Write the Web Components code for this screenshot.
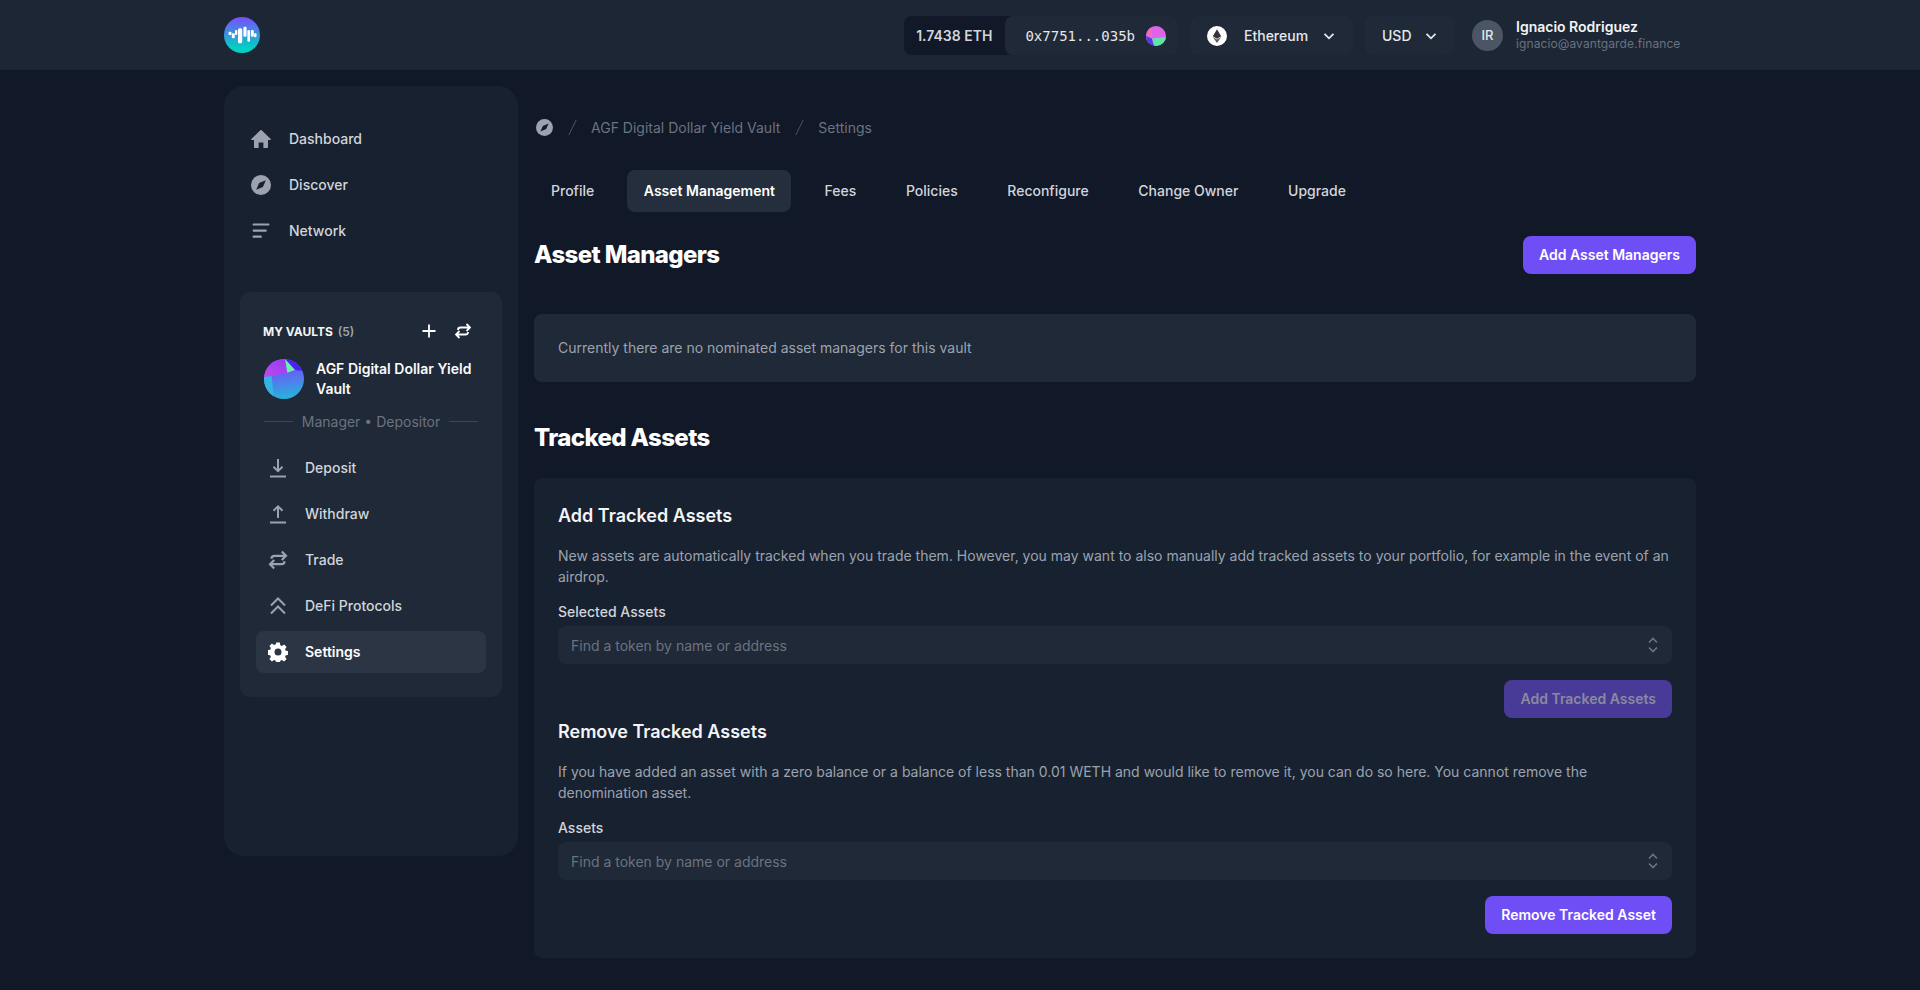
<!DOCTYPE html>
<html lang="en">
<head>
<meta charset="utf-8">
<title>Asset Management</title>
<style>
  html, body { margin: 0; padding: 0; background: #111827; overflow: hidden; }
  body { font-family: Inter, "Liberation Sans", sans-serif; color: #fff; }
</style>
</head>
<body>
<app-shell>
  <app-header slot="header"></app-header>
  <side-nav slot="side"></side-nav>
  <settings-page slot="main"></settings-page>
</app-shell>

<script>
const ICONS = {
  home: '<svg viewBox="0 0 20 20" width="20" height="20" fill="currentColor"><path d="M10.700 1.300a1 1 0 0 0-1.400 0l-9 8.700c-.3.4-.1.9.4.9H3v7.100c0 .6.4 1 1 1h3.600v-5.500h4.800V19H16c.6 0 1-.4 1-1v-7.100h2.300c.5 0 .7-.5.4-.9z"/></svg>',
  compass: '<svg viewBox="0 0 20 20" width="20" height="20"><circle cx="10" cy="10" r="10" fill="currentColor"/><path d="M14.800 5.200 11.900 11.900 5.200 14.800 8.100 8.100z" fill="var(--cut,#18212f)"/></svg>',
  network: '<svg viewBox="0 0 20 20" width="20" height="20" fill="currentColor"><rect x="1.700" y="2.400" width="16.600" height="2.200" rx=".6"/><rect x="1.700" y="8.500" width="14" height="2.200" rx=".6"/><rect x="1.700" y="14.600" width="9" height="2.200" rx=".6"/></svg>',
  deposit: '<svg viewBox="0 0 20 20" width="20" height="20" fill="none" stroke="currentColor" stroke-width="2"><path d="M10 1v12M5.500 8.800 10 13.200l4.500-4.400"/><path d="M2 18.500h16"/></svg>',
  withdraw: '<svg viewBox="0 0 20 20" width="20" height="20" fill="none" stroke="currentColor" stroke-width="2"><path d="M10 14V2.500M5.500 6.800 10 2.300l4.500 4.500"/><path d="M2 18.500h16"/></svg>',
  trade: '<svg viewBox="0 0 20 20" width="20" height="20" fill="none" stroke="currentColor" stroke-width="2.200"><path d="M18 5.800H6.500c-2 0-3 1.200-3 3M13.800 1.500 18 5.800l-4.200 4.200"/><path d="M2 14.200h11.500c2 0 3-1.200 3-3M6.200 10 2 14.200l4.200 4.300"/></svg>',
  defi: '<svg viewBox="0 0 20 20" width="20" height="20" fill="none" stroke="currentColor" stroke-width="2"><path d="M3 9.500 10 2.500l7 7M3 17.500l7-7 7 7"/></svg>',
  gear: '<svg viewBox="0 0 20 20" width="20" height="20" fill="currentColor"><path fill-rule="evenodd" d="M8.200.6h3.600l.5 2.600 1.600.7 2.200-1.500 2.500 2.500-1.500 2.200.7 1.600 2.600.5v3.600l-2.600.5-.7 1.600 1.500 2.200-2.500 2.500-2.200-1.500-1.600.7-.5 2.600H8.200l-.5-2.600-1.600-.7-2.200 1.500-2.500-2.500 1.500-2.200-.7-1.600-2.600-.5V8.200l2.600-.5.7-1.600L1.400 3.900l2.500-2.500 2.200 1.500 1.600-.7zM10 6.500a3.500 3.500 0 1 0 0 7 3.500 3.500 0 0 0 0-7z"/></svg>',
  plus: '<svg viewBox="0 0 16 16" width="16" height="16" fill="none" stroke="currentColor" stroke-width="1.800"><path d="M8 1.500v13M1.500 8h13"/></svg>',
  swap: '<svg viewBox="0 0 16 16" width="16" height="16" fill="none" stroke="currentColor" stroke-width="1.800"><path d="M15 4.500H5.500c-1.700 0-2.500 1-2.500 2.500M11.500 1 15 4.500 11.500 8"/><path d="M1 11.500h9.500c1.700 0 2.500-1 2.500-2.500M4.500 8 1 11.500 4.500 15"/></svg>',
  chevron: '<svg viewBox="0 0 14 14" width="14" height="14" fill="none" stroke="currentColor" stroke-width="1.800"><path d="M2.500 4.800 7 9.300l4.500-4.500"/></svg>',
  updown: '<svg viewBox="0 0 12 18" width="12" height="18" fill="none" stroke="currentColor" stroke-width="1.700"><path d="M2 6.500 6 2.500l4 4M2 11.500l4 4 4-4"/></svg>'
};

class AppShell extends HTMLElement {
  constructor() {
    super();
    this.attachShadow({ mode: 'open' }).innerHTML = `
    <style>
      :host { display: block; min-height: 100vh; background: #111827; }
      .wrap { width: 1472px; margin: 0 auto; display: flex; gap: 16px; padding-top: 16px; align-items: flex-start; }
      .main { flex: 1; min-width: 0; }
    </style>
    <slot name="header"></slot>
    <div class="wrap">
      <slot name="side"></slot>
      <div class="main"><slot name="main"></slot></div>
    </div>`;
  }
}

class AppHeader extends HTMLElement {
  constructor() {
    super();
    this.attachShadow({ mode: 'open' }).innerHTML = `
    <style>
      :host { display: block; height: 70px; background: #1c2635; box-sizing: border-box; }
      .in { width: 1472px; height: 100%; margin: 0 auto; display: flex; align-items: center; justify-content: flex-end; }
      .logo { width: 36px; height: 36px; display: block; margin-right: auto; }
      .acct { display: flex; height: 39px; margin-top: 1px; font-size: 14px; font-weight: 600; }
      .bal { background: #111827; color: #d1d5db; border-radius: 8px 0 0 8px; padding: 0 27px 0 12px; display: flex; align-items: center; margin-right: -14px; }
      .addr { background: #1f2937; border-radius: 8px; color: #e5e7eb; display: flex; align-items: center; padding: 0 12px 0 20px; gap: 11px; font: 500 14px "DejaVu Sans Mono", "Liberation Mono", monospace; }
      .pick { height: 39px; margin-top: 1px; background: #1f2937; border-radius: 8px; display: flex; align-items: center; font-size: 14px; font-weight: 500; color: #e5e7eb; box-sizing: border-box; }
      .eth { margin-left: 12px; padding: 0 17px; width: 163px; }
      .eth span { margin: 0 14px 0 17px; }
      .usd { margin-left: 12px; padding: 0 13px 0 17px; width: 90px; }
      .usd span { margin-right: 12px; }
      svg { display: block; flex: none; }
      .who { display: flex; align-items: center; margin-left: 17px; width: 224px; box-sizing: border-box; }
      .av { width: 31px; height: 31px; border-radius: 50%; background: #4b5563; color: #e5e7eb; font-size: 13px; font-weight: 500; display: flex; align-items: center; justify-content: center; margin-right: 13px; }
      .nm { font-size: 14px; font-weight: 600; color: #f3f4f6; line-height: 17px; }
      .em { font-size: 12px; color: #6b7280; line-height: 17px; letter-spacing: .1px; }
    </style>
    <div class="in">
      <svg class="logo" viewBox="0 0 36 36">
        <defs><linearGradient id="lg" x1="0" y1="0" x2="0" y2="1"><stop offset="0" stop-color="#7a4dff"/><stop offset=".85" stop-color="#03cfc2"/></linearGradient></defs>
        <circle cx="18" cy="18" r="18" fill="url(#lg)"/>
        <g fill="#fff"><rect x="4.500" y="14.700" width="3" height="3.300" rx="1"/><rect x="7.800" y="16.300" width="3" height="5" rx="1"/><rect x="11" y="13" width="2.300" height="5" rx="1"/><rect x="14" y="11.300" width="4.200" height="15" rx="1.500"/><rect x="19.400" y="9.700" width="3.200" height="10" rx="1.200"/><rect x="23.400" y="13" width="2.600" height="11.700" rx="1.200"/><rect x="26.800" y="13" width="3" height="6.700" rx="1"/><rect x="30" y="16.300" width="2.500" height="4" rx="1"/></g>
      </svg>
      <div class="acct">
        <div class="bal">1.7438 ETH</div>
        <div class="addr">0x7751...035b
          <svg width="20" height="20" viewBox="0 0 20 20"><defs><clipPath id="a1"><circle cx="10" cy="10" r="10"/></clipPath></defs><g clip-path="url(#a1)"><rect width="20" height="20" fill="#e062e8"/><path d="M0 0h5.500l.8 13L0 20z" fill="#f06bc0"/><path d="M6 12.500 20 11v9H8z" fill="#5fe6a6"/><path d="M0 10l5.800 2.500L8 20H0z" fill="#4a3cf0"/></g></svg>
        </div>
      </div>
      <div class="pick eth">
        <svg width="20" height="20" viewBox="0 0 20 20"><circle cx="10" cy="10" r="10" fill="#fff"/><path d="M10 3.200 5.800 10.200 10 12.700l4.200-2.500z" fill="#343434"/><path d="M10 13.600 5.800 11.100 10 17l4.200-5.900z" fill="#5a5a5a"/></svg>
        <span>Ethereum</span>${ICONS.chevron}
      </div>
      <div class="pick usd"><span>USD</span>${ICONS.chevron}</div>
      <div class="who">
        <div class="av">IR</div>
        <div><div class="nm">Ignacio Rodriguez</div><div class="em">ignacio@avantgarde.finance</div></div>
      </div>
    </div>`;
  }
}

class NavItem extends HTMLElement {
  constructor() {
    super();
    const icon = ICONS[this.getAttribute('icon')] || '';
    this.attachShadow({ mode: 'open' }).innerHTML = `
    <style>
      :host { display: block; height: 46px; padding: 2px 0; box-sizing: border-box; font-size: 14px; font-weight: 500; color: #d1d5db; --cut: #18212f; }
      .row { height: 42px; display: flex; align-items: center; border-radius: 8px; padding-left: 12px; gap: var(--gap, 18px); }
      .ic { color: #9ca3af; display: flex; }
      .tx { margin-top: -1px; }
      :host([active]) .row { background: #2c3544; color: #fff; font-weight: 600; }
      :host([active]) .ic { color: #fff; }
    </style>
    <div class="row"><span class="ic">${icon}</span><span class="tx"><slot></slot></span></div>`;
  }
}

class VaultCard extends HTMLElement {
  constructor() {
    super();
    this.attachShadow({ mode: 'open' }).innerHTML = `
    <style>
      :host { display: block; margin: 0 16px; background: #1f2937; border-radius: 10px; padding: 28px 16px 16px; height: 405px; box-sizing: border-box; }
      .head { display: flex; align-items: center; height: 22px; padding: 0 7px; }
      .t { font-size: 12px; font-weight: 700; color: #f3f4f6; flex: 1; }
      .t i { font-style: normal; font-weight: 600; color: #9ca3af; margin-left: 2px; }
      .acts { display: flex; gap: 18px; color: #fff; margin-right: 8px; }
      .acts svg { display: block; }
      .v { display: flex; align-items: center; gap: 12px; margin-top: 17px; padding: 0 8px; font-size: 14px; font-weight: 600; line-height: 20px; color: #f9fafb; }
      .v svg { flex: none; }
      .role { display: flex; align-items: center; gap: 9px; padding: 0 8px; margin: 12px 0 14px; color: #6b7280; font-size: 14px; height: 20px; white-space: nowrap; }
      .role b { flex: 1; height: 1px; background: #3d4654; }
      nav-item { --cut: #1f2937; --gap: 17px; }
      nav-item[active] { --cut: #2c3544; }
    </style>
    <div class="head">
      <div class="t">MY VAULTS <i>(5)</i></div>
      <div class="acts">${ICONS.plus}${ICONS.swap}</div>
    </div>
    <div class="v">
      <svg width="40" height="40" viewBox="0 0 40 40"><defs><clipPath id="v1"><circle cx="20" cy="20" r="20"/></clipPath><linearGradient id="v2" x1=".4" y1=".3" x2=".5" y2="1"><stop offset="0" stop-color="#6a5cf7"/><stop offset="1" stop-color="#25b4dc"/></linearGradient><linearGradient id="v3" x1="1" y1="0" x2="0" y2="1"><stop offset="0" stop-color="#8f3df2"/><stop offset="1" stop-color="#c449ea"/></linearGradient></defs><g clip-path="url(#v1)"><rect width="40" height="40" fill="url(#v2)"/><path d="M0 0h21l2.300 13.700L0 18.300z" fill="url(#v3)"/><path d="M21 0h19v12l-9-1z" fill="#4622f5"/><path d="M21 0l10 11-7.700 2.700z" fill="#6ff0a8"/><path d="M0 18.300 7.700 17 10 40H0z" fill="#33b4e4"/></g></svg>
      <div>AGF Digital Dollar Yield Vault</div>
    </div>
    <div class="role"><b></b>Manager • Depositor<b></b></div>
    <div>
      <nav-item icon="deposit">Deposit</nav-item>
      <nav-item icon="withdraw">Withdraw</nav-item>
      <nav-item icon="trade">Trade</nav-item>
      <nav-item icon="defi">DeFi Protocols</nav-item>
      <nav-item icon="gear" active>Settings</nav-item>
    </div>`;
  }
}

class SideNav extends HTMLElement {
  constructor() {
    super();
    this.attachShadow({ mode: 'open' }).innerHTML = `
    <style>
      :host { display: block; width: 294px; height: 770px; flex: none; background: #18212f; border-radius: 20px; padding-top: 30px; box-sizing: border-box; }
      .top { padding: 0 16px 0 15px; margin-bottom: 38px; }
    </style>
    <div class="top">
      <nav-item icon="home">Dashboard</nav-item>
      <nav-item icon="compass">Discover</nav-item>
      <nav-item icon="network">Network</nav-item>
    </div>
    <vault-card></vault-card>`;
  }
}

class TabBar extends HTMLElement {
  constructor() {
    super();
    const tabs = ['Profile', 'Asset Management', 'Fees', 'Policies', 'Reconfigure', 'Change Owner', 'Upgrade'];
    this.attachShadow({ mode: 'open' }).innerHTML = `
    <style>
      :host { display: flex; gap: 16.6px; height: 42px; }
      div { height: 42px; padding: 0 16px 2px 17px; box-sizing: border-box; display: flex; align-items: center; border-radius: 8px; font-size: 14px; font-weight: 500; color: #d1d5db; }
      .on { background: #242e3d; color: #fff; font-weight: 600; }
    </style>
    ${tabs.map((t, i) => `<div class="${i === 1 ? 'on' : ''}">${t}</div>`).join('')}`;
  }
}

class ActionButton extends HTMLElement {
  constructor() {
    super();
    this.attachShadow({ mode: 'open' }).innerHTML = `
    <style>
      :host { display: inline-flex; align-items: center; height: 38px; padding: 0 16px 1px; box-sizing: border-box; background: #6f4ef6; color: #fff; font-size: 14px; font-weight: 600; border-radius: 8px; }
      :host([disabled]) { background: #483b98; color: #8a8a9e; }
    </style>
    <slot></slot>`;
  }
}

class TokenSelect extends HTMLElement {
  constructor() {
    super();
    this.attachShadow({ mode: 'open' }).innerHTML = `
    <style>
      :host { display: block; }
      label { display: block; font-size: 14px; font-weight: 500; color: #d1d5db; line-height: 20px; margin-bottom: 4px; }
      .box { height: 38px; background: #1f2937; border-radius: 8px; display: flex; align-items: center; justify-content: space-between; padding: 0 13px; font-size: 14px; color: #6b7280; }
      svg { display: block; color: #6b7280; }
    </style>
    <label>${this.getAttribute('label')}</label>
    <div class="box"><span>Find a token by name or address</span>${ICONS.updown}</div>`;
  }
}

class SettingsPage extends HTMLElement {
  constructor() {
    super();
    this.attachShadow({ mode: 'open' }).innerHTML = `
    <style>
      :host { display: block; }
      .crumbs { display: flex; align-items: center; height: 20px; margin-top: 31px; font-size: 14px; color: #6b7280; --cut: #111827; }
      .crumbs .c { color: #9ca3af; display: flex; margin-left: 2px; margin-top: 1px; }
      .crumbs .c svg { width: 17px; height: 17px; }
      .crumbs .s { width: 1px; height: 17px; margin: 1px 18px 0 19px; background: #4b5563; transform: rotate(26deg); }
      tab-bar { margin-top: 33px; }
      h2 { margin: 0; font-size: 24px; font-weight: 800; color: #fff; letter-spacing: -.62px; line-height: 32px; }
      .sec { display: flex; align-items: center; justify-content: space-between; height: 38px; margin-top: 24px; }
      .note { margin-top: 40px; height: 68px; padding: 0 24px 1px; box-sizing: border-box; background: #1f2937; border-radius: 8px; display: flex; align-items: center; font-size: 14px; color: #9ca3af; }
      .h2b { margin-top: 40px; }
      .card { margin-top: 24px; background: #18212f; border-radius: 8px; padding: 24px; height: 480px; box-sizing: border-box; }
      h3 { margin: 0; font-size: 18px; font-weight: 600; color: #f3f4f6; line-height: 28px; }
      p { margin: 16px 0 0; font-size: 14px; line-height: 20.5px; color: #9ca3af; }
      token-select { margin-top: 15px; }
      .end { display: flex; justify-content: flex-end; margin-top: 16px; }
    </style>
    <div class="crumbs">
      <span class="c">${ICONS.compass}</span><span class="s"></span>
      <span>AGF Digital Dollar Yield Vault</span><span class="s"></span><span>Settings</span>
    </div>
    <tab-bar></tab-bar>
    <div class="sec"><h2>Asset Managers</h2><action-button>Add Asset Managers</action-button></div>
    <div class="note">Currently there are no nominated asset managers for this vault</div>
    <h2 class="h2b">Tracked Assets</h2>
    <div class="card">
      <h3>Add Tracked Assets</h3>
      <p>New assets are automatically tracked when you trade them. However, you may want to also manually add tracked assets to your portfolio, for example in the event of an airdrop.</p>
      <token-select label="Selected Assets"></token-select>
      <div class="end"><action-button disabled>Add Tracked Assets</action-button></div>
      <h3>Remove Tracked Assets</h3>
      <p>If you have added an asset with a zero balance or a balance of less than 0.01 WETH and would like to remove it, you can do so here. You cannot remove the denomination asset.</p>
      <token-select label="Assets"></token-select>
      <div class="end"><action-button>Remove Tracked Asset</action-button></div>
    </div>`;
  }
}

customElements.define('app-shell', AppShell);
customElements.define('app-header', AppHeader);
customElements.define('nav-item', NavItem);
customElements.define('vault-card', VaultCard);
customElements.define('side-nav', SideNav);
customElements.define('tab-bar', TabBar);
customElements.define('action-button', ActionButton);
customElements.define('token-select', TokenSelect);
customElements.define('settings-page', SettingsPage);
</script>
</body>
</html>
